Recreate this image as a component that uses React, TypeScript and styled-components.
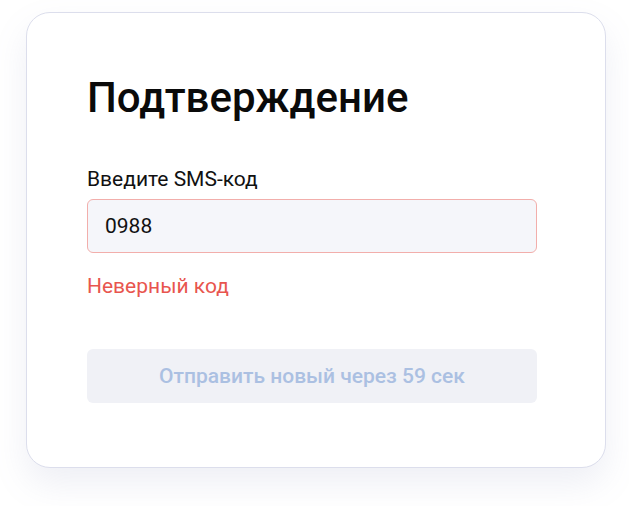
import styled, { createGlobalStyle } from 'styled-components';

const GlobalStyle = createGlobalStyle`
  html, body {
    margin: 0;
    padding: 0;
    background: #ffffff;
    font-family: Roboto, "Noto Sans", "Liberation Sans", sans-serif;
  }
`;

const Page = styled.div`
  padding: 12px 0 0 26px;
  width: 629px;
  height: 506px;
  box-sizing: border-box;
`;

const Card = styled.div`
  width: 580px;
  height: 456px;
  box-sizing: border-box;
  padding: 61px 68px 0 60px;
  background: #ffffff;
  border: 1px solid #dcdeec;
  border-radius: 24px;
  box-shadow: 0 16px 34px rgba(120, 130, 180, 0.13);
`;

const Title = styled.h1`
  margin: 0 0 45px;
  font-size: 42px;
  line-height: 48px;
  font-weight: 500;
  color: #0a0a0a;
`;

const Label = styled.label`
  display: block;
  font-size: 21px;
  line-height: 24px;
  color: #111111;
  margin-bottom: 8px;
`;

const Input = styled.input<{ $error?: boolean }>`
  display: block;
  width: 100%;
  height: 54px;
  box-sizing: border-box;
  padding: 0 17px;
  font-family: inherit;
  font-size: 21px;
  color: #111111;
  background: #f5f6fa;
  border: 1.5px solid ${(p) => (p.$error ? '#f2aeab' : '#dedfeb')};
  border-radius: 6px;
  outline: none;
`;

const ErrorText = styled.div`
  margin-top: 21px;
  font-size: 21px;
  line-height: 24px;
  color: #e8554e;
`;

const ResendButton = styled.button`
  display: block;
  width: 100%;
  height: 54px;
  margin-top: 51px;
  border: none;
  border-radius: 6px;
  background: #f0f1f6;
  color: #abc0e2;
  font-family: inherit;
  font-size: 21px;
  font-weight: 500;
  cursor: default;
`;

export default function App() {
  return (
    <>
      <GlobalStyle />
      <Page>
        <Card>
          <Title>Подтверждение</Title>
          <Label htmlFor="sms">Введите SMS-код</Label>
          <Input id="sms" $error defaultValue="0988" />
          <ErrorText>Неверный код</ErrorText>
          <ResendButton disabled>Отправить новый через 59 сек</ResendButton>
        </Card>
      </Page>
    </>
  );
}
